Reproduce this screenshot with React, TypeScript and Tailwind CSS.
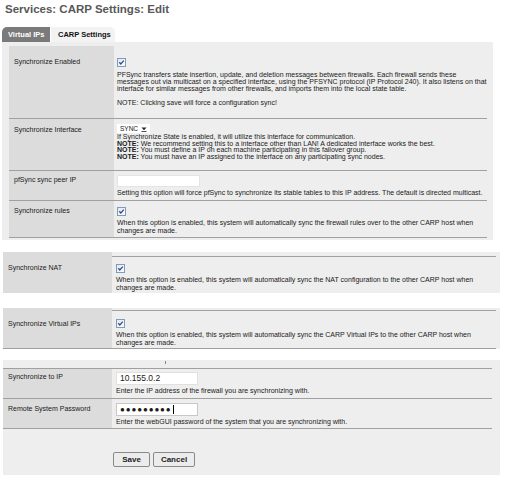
import React from 'react'

const Check = () => (
  <svg width="9" height="9" viewBox="0 0 9 9" className="block">
    <defs>
      <linearGradient id="cb" x1="0" y1="0" x2="1" y2="1">
        <stop offset="0" stopColor="#dfe6f2" />
        <stop offset="1" stopColor="#ffffff" />
      </linearGradient>
    </defs>
    <rect x="0.5" y="0.5" width="8" height="8" fill="url(#cb)" stroke="#7f9db9" />
    <path d="M2.3 4.3 L3.8 6 L6.8 2.6" fill="none" stroke="#3a4a8a" strokeWidth="1.3" />
  </svg>
)

const Row = ({
  label,
  h,
  labelPad,
  className = '',
  labelClass = 'w-[105px] pl-[5px]',
  children,
}: {
  label: string
  h: string
  labelPad: string
  className?: string
  labelClass?: string
  children: React.ReactNode
}) => (
  <div className={`flex ${h} ${className}`}>
    <div className={`${labelClass} ${labelPad} bg-[#dcdcdc] shrink-0 leading-[7px]`}>{label}</div>
    <div className="flex-1 pl-[3px]">{children}</div>
  </div>
)

export default function App() {
  return (
    <div
      className="w-[509px] h-[481px] bg-white overflow-hidden text-[7px] text-[#1a1a1a] whitespace-nowrap"
      style={{ fontFamily: '"Liberation Sans", Arial, sans-serif' }}
    >
      {/* Title */}
      <div className="h-[27px] pl-[5px] pt-[3px] text-[11.5px] font-bold text-[#585858] leading-[12px]">
        Services: CARP Settings: Edit
      </div>

      {/* Tabs */}
      <div className="flex h-[15px] pl-[2px] gap-[1px] text-[7.5px] font-bold">
        <div className="w-[48px] bg-[#7a7a7a] text-white rounded-tl-[5px] flex items-center pl-[6px]">Virtual IPs</div>
        <div className="w-[64px] bg-[#f3f3f3] text-[#111] rounded-tr-[5px] flex items-center pl-[7px]">CARP Settings</div>
      </div>

      {/* Panel 1 */}
      <div className="ml-[2px] w-[491px] h-[198px] bg-[#eeeeee] pt-[4px] pl-[7px] pr-[6px]">
        <Row label="Synchronize Enabled" h="h-[73px]" labelPad="pt-[12px]" className="border-b border-[#a0a0a0]">
          <div className="pt-[12px]">
            <Check />
            <div className="mt-[4px] leading-[7px]">
              PFSync transfers state insertion, update, and deletion messages between firewalls. Each firewall sends these
              <br />
              messages out via multicast on a specified interface, using the PFSYNC protocol (IP Protocol 240). It also listens on that
              <br />
              interface for similar messages from other firewalls, and imports them into the local state table.
              <br />
              <br />
              NOTE: Clicking save will force a configuration sync!
            </div>
          </div>
        </Row>
        <Row label="Synchronize Interface" h="h-[52px]" labelPad="pt-[7px]" className="border-b border-[#a0a0a0]">
          <div className="pt-[5px]">
            <div className="w-[33px] h-[9px] bg-white flex items-center justify-between pl-[3px] pr-[3px] text-[6.5px]">
              <span>SYNC</span>
              <svg width="6" height="6" viewBox="0 0 6 6">
                <path d="M0.5 1.5 L5.5 1.5 L3 4.2 Z" fill="#222" />
                <rect x="0.5" y="5" width="5" height="0.8" fill="#222" />
              </svg>
            </div>
            <div className="mt-[1px] leading-[6.7px]">
              If Synchronize State is enabled, it will utilize this interface for communication.
              <br />
              <b>NOTE:</b> We recommend setting this to a interface other than LAN! A dedicated interface works the best.
              <br />
              <b>NOTE:</b> You must define a IP on each machine participating in this failover group.
              <br />
              <b>NOTE:</b> You must have an IP assigned to the interface on any participating sync nodes.
            </div>
          </div>
        </Row>
        <Row label="pfSync sync peer IP" h="h-[30px]" labelPad="pt-[5px]" className="border-b border-[#a0a0a0]">
          <div className="pt-[4px]">
            <div className="w-[83px] h-[12px] bg-white border border-[#e4e4e4]" />
            <div className="mt-[2px] leading-[7px]">
              Setting this option will force pfSync to synchronize its stable tables to this IP address. The default is directed multicast.
            </div>
          </div>
        </Row>
        <Row label="Synchronize rules" h="h-[37px]" labelPad="pt-[6px]" className="border-b border-[#a0a0a0]">
          <div className="pt-[6px]">
            <Check />
            <div className="mt-[3px] leading-[7.5px]">
              When this option is enabled, this system will automatically sync the firewall rules over to the other CARP host when
              <br />
              changes are made.
            </div>
          </div>
        </Row>
      </div>

      {/* Panel 2 */}
      <div className="mt-[12px] ml-[3px] w-[497px] h-[41px] bg-[#eeeeee] flex">
        <div className="w-[109px] shrink-0 bg-[#dcdcdc] pl-[5px] pt-[12px] leading-[7px]">Synchronize NAT</div>
        <div className="flex-1 pr-[4px]">
          <div className="mt-[4px] border-t border-[#a0a0a0] pl-[4px] pt-[7px]">
            <Check />
            <div className="mt-[3px] leading-[8px]">
              When this option is enabled, this system will automatically sync the NAT configuration to the other CARP host when
              <br />
              changes are made.
            </div>
          </div>
        </div>
      </div>

      {/* Panel 3 */}
      <div className="mt-[15px] ml-[3px] w-[497px] h-[41px] bg-[#eeeeee] flex">
        <div className="w-[109px] shrink-0 bg-[#dcdcdc] pl-[5px] pt-[12px] leading-[7px] border-b border-[#a0a0a0]">
          Synchronize Virtual IPs
        </div>
        <div className="flex-1 pr-[4px] flex flex-col">
          <div className="mt-[2px] border-t border-b border-[#a0a0a0] pl-[4px] pt-[8px] flex-1">
            <Check />
            <div className="mt-[3px] leading-[8px]">
              When this option is enabled, this system will automatically sync the CARP Virtual IPs to the other CARP host when
              <br />
              changes are made.
            </div>
          </div>
        </div>
      </div>

      {/* Panel 4 */}
      <div className="mt-[11px] ml-[3px] w-[497px] h-[115px] bg-[#eeeeee] pt-[8px] pr-[8px]">
        <div className="h-0 relative">
          <span className="absolute left-[162px] top-[-7px] w-[1px] h-[3px] bg-[#888]" />
        </div>
        <div className="border-t border-[#a0a0a0]">
          <Row
            label="Synchronize to IP"
            h="h-[30px]"
            labelPad="pt-[4px]"
            labelClass="w-[109px] pl-[5px]"
            className="border-b border-[#a0a0a0]"
          >
            <div className="pt-[3px] pl-[1px]">
              <div className="w-[82px] h-[13px] bg-white border border-[#e0e0e0] text-[8.5px] leading-[11px] pl-[3px]">
                10.155.0.2
              </div>
              <div className="mt-[2px] leading-[8px]">Enter the IP address of the firewall you are synchronizing with.</div>
            </div>
          </Row>
          <Row
            label="Remote System Password"
            h="h-[30px]"
            labelPad="pt-[6px]"
            labelClass="w-[109px] pl-[5px]"
            className="border-b border-[#a0a0a0]"
          >
            <div className="pt-[4px] pl-[1px]">
              <div className="w-[82px] h-[13px] bg-white border border-[#c8c8c8] flex items-center pl-[3px]">
                <span className="text-[8px] font-bold tracking-[0.9px] leading-[8px]">●●●●●●●●●</span>
                <span className="w-[1px] h-[9px] bg-black ml-[1px]" />
              </div>
              <div className="mt-[2px] leading-[8px]">Enter the webGUI password of the system that you are synchronizing with.</div>
            </div>
          </Row>
          <div className="flex gap-[3px] pl-[110px] pt-[23px]">
            <button className="h-[15px] w-[37px] bg-[#ececec] border border-[#8a8a8a] rounded-[2px] text-[8px] font-bold text-[#222]">
              Save
            </button>
            <button className="h-[15px] w-[42px] bg-[#ececec] border border-[#8a8a8a] rounded-[2px] text-[8px] font-bold text-[#222]">
              Cancel
            </button>
          </div>
        </div>
      </div>
    </div>
  )
}
